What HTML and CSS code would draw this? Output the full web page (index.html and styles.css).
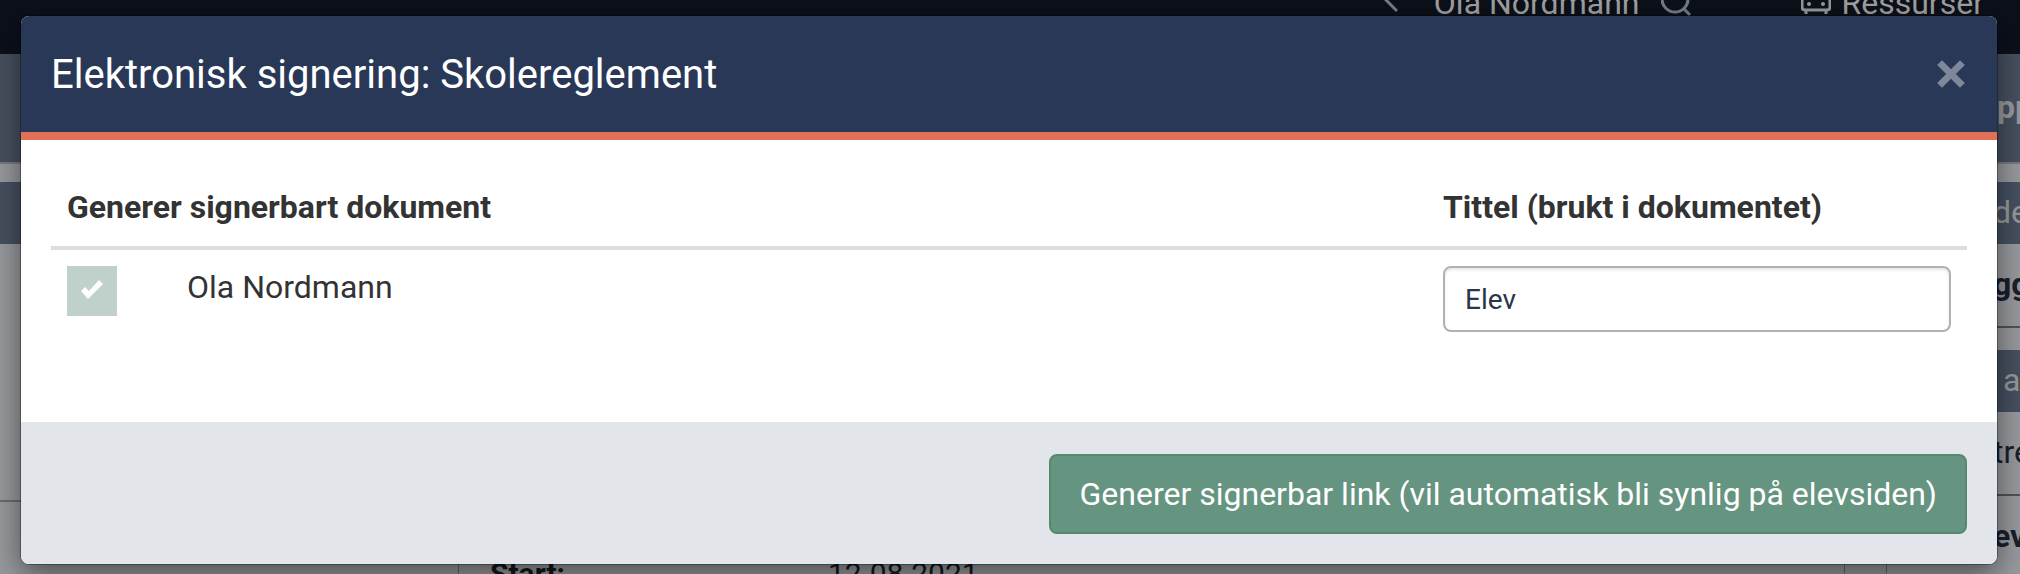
FILE: index.html
```html
<!DOCTYPE html>
<html lang="no">
<head>
<meta charset="utf-8">
<title>Elektronisk signering</title>
<link rel="stylesheet" href="styles.css">
</head>
<body>
<div class="page">
  <header class="topbar">
    <svg class="chevron" viewBox="0 0 14 24"><path d="M13 1 L2 12 L13 23"/></svg>
    <span class="topbar-name">Ola Nordmann</span>
    <svg class="search" viewBox="0 0 32 32"><circle cx="14" cy="15" r="13"/><path d="M22 24 L29 31"/></svg>
    <svg class="bus" viewBox="0 0 30 32"><path d="M1 16V24Q1 27 4 27H26Q29 27 29 24V16L26 6Q25 2 21 2H9Q5 2 4 6Z M5 27V31 M25 27V31"/><circle class="lamp" cx="8" cy="21" r="2"/><circle class="lamp" cx="22" cy="21" r="2"/></svg>
    <span class="topbar-link">Ressurser</span>
  </header>
  <div class="subbar"><span>Opp</span></div>
  <div class="columns">
    <section class="left"><div class="band"></div><div class="block"></div></section>
    <section class="middle"><dl class="facts"><dt>Start:</dt><dd>12.08.2021</dd></dl></section>
    <aside class="right">
      <div class="band">de</div>
      <div class="row row-strong">gg</div>
      <div class="band band-next">a</div>
      <div class="row row-line">tre</div>
      <div class="row row-strong row-last">eve</div>
    </aside>
  </div>
</div>
<div class="backdrop">
  <form class="modal" role="dialog" aria-labelledby="title">
    <div class="modal-header">
      <h1 id="title">Elektronisk signering: Skolereglement</h1>
      <button class="close" type="button" aria-label="Lukk"><svg viewBox="0 0 28 28"><path d="M4 4 L24 24 M24 4 L4 24"/></svg></button>
    </div>
    <div class="modal-body">
      <table>
        <colgroup><col class="col-check"><col><col class="col-title"></colgroup>
        <thead><tr><th colspan="2">Generer signerbart dokument</th><th id="doc-title">Tittel (brukt i dokumentet)</th></tr></thead>
        <tbody><tr>
          <td><input class="check" id="person" type="checkbox" checked></td>
          <td class="person"><label for="person">Ola Nordmann</label></td>
          <td><input class="field" type="text" value="Elev" aria-labelledby="doc-title"></td>
        </tr></tbody>
      </table>
    </div>
    <div class="modal-footer"><button class="submit" type="button">Generer signerbar link (vil automatisk bli synlig på elevsiden)</button></div>
  </form>
</div>
</body>
</html>
```
FILE: styles.css
```css
* { box-sizing: border-box; }
body { margin: 0; height: 100vh; overflow: hidden; font: 32px/40px Roboto, "Liberation Sans", sans-serif; color: #333; }
.page { height: 100vh; overflow: hidden; background: #98999d; color: #18202d; }
.topbar { height: 54px; display: flex; align-items: flex-start; justify-content: flex-end; padding-right: 36px; background: #0c1019; color: #a0a1a3; }
.topbar-name, .topbar-link { margin-top: -17px; }
.topbar svg { fill: none; stroke-width: 3; flex: none; }
.chevron { width: 14px; height: 24px; margin: -12px 36px 0 0; stroke: #747d8c; }
.search { width: 32px; height: 32px; margin: -16px 108px 0 22px; stroke: #747d8c; }
.bus { width: 30px; height: 32px; margin: -17px 10px 0 0; stroke: #98999b; }
.topbar .lamp { fill: #98999b; stroke: none; }
.subbar { height: 110px; padding: 33px 0; display: flex; justify-content: flex-end; background: #465060; border-bottom: 2px solid #777b82; color: #98999b; font-weight: 700; }
.subbar span { width: 45px; white-space: nowrap; }
.columns { display: flex; height: 410px; padding-top: 18px; }
.left { width: 458px; flex: none; }
.band { height: 62px; padding: 10px 0; background: #465060; color: #98999b; }
.block { height: 258px; border-bottom: 2px solid #6b6c70; }
.middle { flex: 1; display: flex; align-items: flex-end; border-left: 1px solid #66686d; border-right: 1px solid #66686d; margin-right: 41px; }
.facts { margin: 0 0 -20px 31px; display: flex; color: #14161a; font-size: 30px; }
.facts dt { width: 338px; font-weight: 700; }
.facts dd { margin: 0; }
.right { width: 134px; flex: none; border-left: 1px solid #66686d; }
.right > div { padding-left: 106px; white-space: nowrap; }
.right .row-strong { font-weight: 700; }
.row { height: 84px; padding-top: 20px; border-bottom: 2px solid #505257; }
.right .band-next { margin-top: 22px; padding-left: 116px; }
.right .row-last { border: 0; }
.backdrop { position: absolute; inset: 0; padding: 16px 23px 10px 21px; }
.modal { height: 100%; display: flex; flex-direction: column; border-radius: 8px; overflow: hidden; background: #fff; box-shadow: 0 0 0 1px rgba(0, 0, 0, .3), 0 10px 30px rgba(0, 0, 0, .5); }
.modal-header { display: flex; justify-content: space-between; align-items: center; padding: 31px 30px; height: 124px; background: #293857; border-bottom: 8px solid #e17058; color: #fff; }
.modal-header h1 { margin: 0; padding-top: 2px; font-size: 40px; line-height: 56px; font-weight: 400; }
.close { border: 0; padding: 0; background: none; width: 32px; height: 32px; }
.close svg { display: block; width: 32px; height: 32px; fill: none; stroke: #7f889a; stroke-width: 6; }
.modal-body { flex: 1; padding: 30px; }
table { width: 100%; border-collapse: separate; border-spacing: 0; table-layout: fixed; }
th { height: 80px; padding: 16px 16px 18px; text-align: left; border-bottom: 4px solid #ddd; }
td { padding: 16px; vertical-align: top; }
.col-check { width: 120px; }
.col-title { width: 540px; }
.person { line-height: 42px; }
.check { appearance: none; display: block; margin: 0; width: 50px; height: 50px; background: #c0d0ca; }
.check:checked::before { content: ""; display: block; width: 50px; height: 50px; background: #fff; clip-path: polygon(14px 25px, 18px 21px, 22px 25px, 32px 14px, 36px 18px, 21px 33px); }
.field { display: block; width: 100%; height: 66px; padding: 0 20px; border: 2px solid #b1b1b1; border-radius: 8px; color: #293548; font: 28px/40px Roboto, sans-serif; box-shadow: inset 0 2px 3px rgba(0, 0, 0, .1); }
.modal-footer { display: flex; justify-content: flex-end; padding: 32px 30px 30px; background: #e2e6eb; }
.submit { height: 80px; padding: 0 28px; border: 2px solid #588870; border-radius: 8px; background: #659480; color: #fff; font: 32px/40px Roboto, sans-serif; }
```
